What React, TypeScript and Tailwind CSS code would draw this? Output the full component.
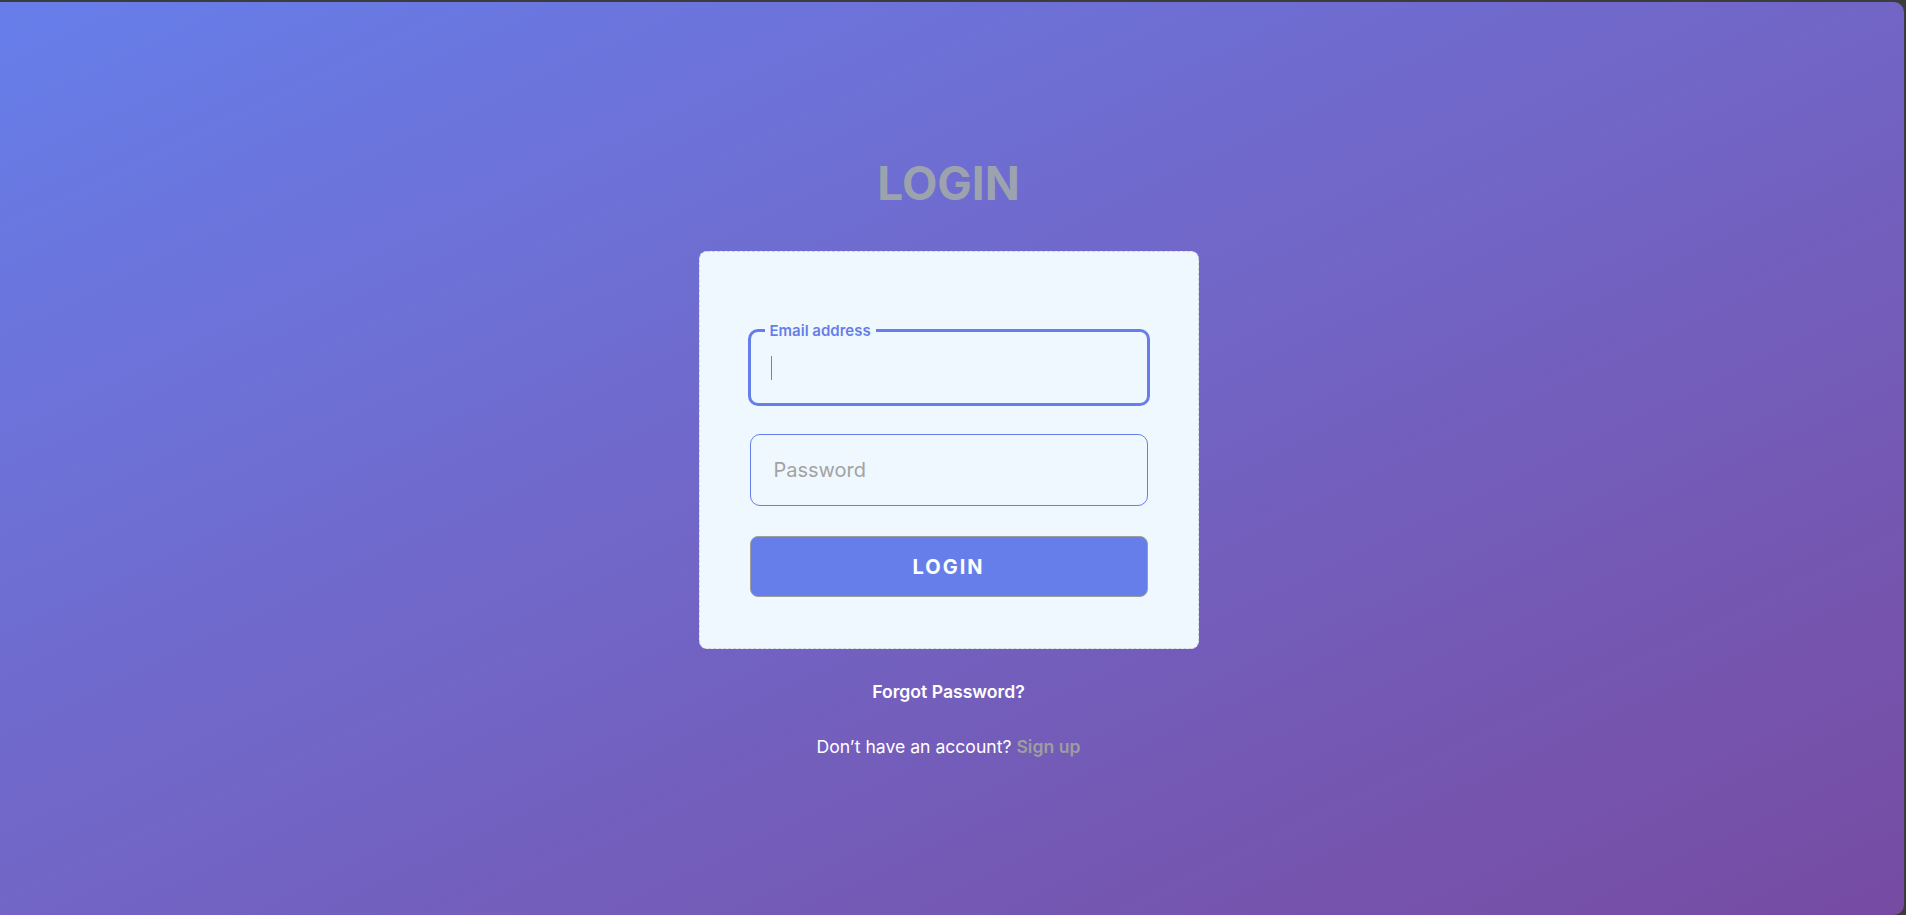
import React from "react";

// login screen, static state with the email field focused
function EmailField() {
  return (
    <div className="relative -mx-[2px] flex h-[77px] items-center rounded-[10px] border-[3px] border-[#667eea] pl-[20px]">
      <span className="absolute -top-[9px] left-[14px] bg-[#f0f8ff] px-[5px] text-[15px] font-semibold leading-[16px] text-[#667eea]">
        Email address
      </span>
      <div className="h-[24px] w-px bg-[#667eea]" />
    </div>
  );
}

function PasswordField() {
  return (
    <div className="mt-[28px] flex h-[72px] items-center rounded-[10px] border border-[#667eea]">
      <input
        type="password"
        placeholder="Password"
        className="w-full bg-transparent pl-[23px] text-[20px] text-gray-700 outline-none placeholder:text-[#a3a3a3]"
      />
    </div>
  );
}

function App() {
  return (
    <div className="h-[915px] w-full bg-[#3c3c3c] pt-[2px] pr-[2px]" style={{ fontFamily: "Inter, 'Noto Sans', sans-serif" }}>
      <div className="flex h-full w-full flex-col items-center justify-center rounded-r-[10px] bg-gradient-to-br from-[#667eea] to-[#764ba2] pr-[7px] pt-[2px]">
        <h1 className="mb-[45px] text-[46px] font-bold leading-none text-[#9ca3af]">LOGIN</h1>

        <div className="w-[500px] rounded-lg border border-dashed border-gray-300 bg-[#f0f8ff] px-[50px] pt-[77px] pb-[51px]">
          <EmailField />
          <PasswordField />
          <button className="mt-[30px] h-[61px] w-full rounded-[8px] border border-[#9e9e9e] bg-[#667eea] text-[20px] font-bold tracking-[2px] text-white">
            LOGIN
          </button>
        </div>

        <p className="mt-[31px] text-[17.6px] font-semibold leading-[24px] text-white">Forgot Password?</p>
        <p className="mt-[31px] text-[17.6px] leading-[24px] text-white">
          Don’t have an account? <span className="font-semibold text-[#9e9e9e]">Sign up</span>
        </p>
      </div>
    </div>
  );
}

export default App;
